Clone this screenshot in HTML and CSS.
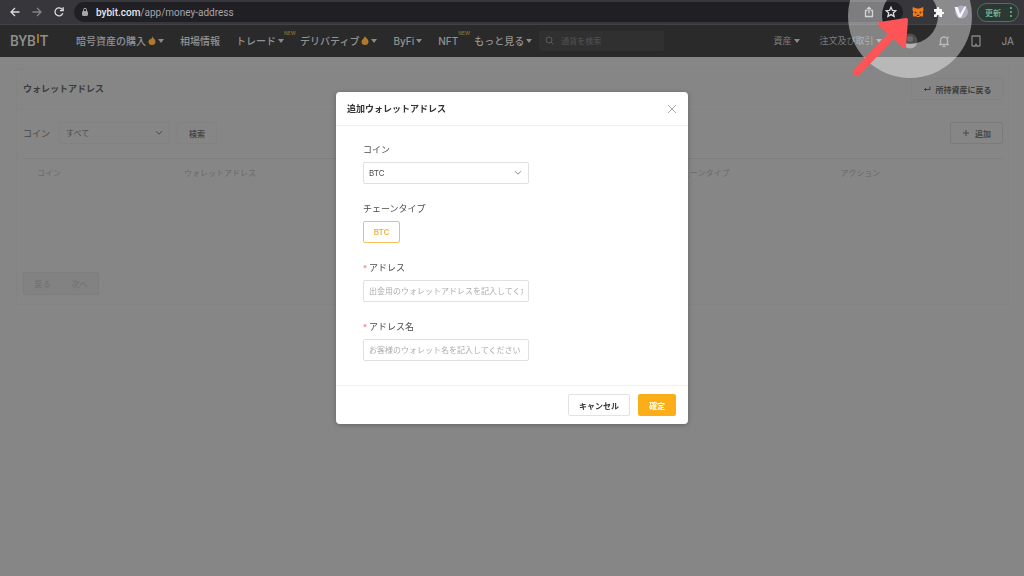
FILE: index.html
```html
<!DOCTYPE html>
<html lang="ja">
<head>
<meta charset="utf-8">
<meta name="viewport" content="width=device-width, initial-scale=1">
<title>ウォレットアドレス</title>
<link rel="stylesheet" href="styles.css">
</head>
<body>
<header class="browser">
  <div class="browser-nav">
    <button class="icon-btn" aria-label="Back"><svg width="12" height="12" viewBox="0 0 12 12"><path d="M10.500 6H2M6 2L2 6l4 4"/></svg></button>
    <button class="icon-btn dim" aria-label="Forward"><svg width="12" height="12" viewBox="0 0 12 12"><path d="M1.500 6H10M6 2l4 4-4 4"/></svg></button>
    <button class="icon-btn" aria-label="Reload"><svg width="12" height="12" viewBox="0 0 12 12"><path d="M9.800 7.200A4 4 0 1 1 9.300 3.600M10.200 1.300V4.600H6.900"/></svg></button>
  </div>
  <div class="address">
    <svg class="lock" width="8" height="10" viewBox="0 0 8 10"><rect x="1.500" y="4.500" width="5" height="4" rx="0.600"/><path d="M2.500 4V2.800a1.500 1.500 0 0 1 3 0V4" fill="none"/></svg>
    <span class="url"><b>bybit.com</b>/app/money-address</span>
    <button class="icon-btn soft" aria-label="Share"><svg width="12" height="12" viewBox="0 0 12 12"><path d="M4.300 4.500H2.500v6h7v-6H7.700M6 7.500V1.500M4 3.300l2-2 2 2"/></svg></button>
    <button class="icon-btn star" aria-label="Bookmark"><svg width="12" height="12" viewBox="0 0 12 12"><path d="M6 1.200l1.400 3.200 3.500.3-2.600 2.300.8 3.400L6 8.600l-3.100 1.800.8-3.400L1.100 4.700l3.500-.3z"/></svg></button>
  </div>
  <div class="extensions">
    <button class="icon-btn" aria-label="MetaMask"><svg class="fox" width="12" height="12" viewBox="0 0 12 12"><path d="M.8 1l3.700 1.500h3L11.200 1l.3 3-.8 2 .6 2.300-.8 2.500-2.300-.6-1 .8H4.800l-1-.8-2.300.6L.7 8.300 1.300 6 .5 4z" fill="#f07c1c"/><path d="M2.500 5.200l2.500 1.600-2 .6zM9.500 5.200L7 6.800l2 .6zM4.500 8.800h3l-.5 1.200H5z" fill="#5b2c12"/></svg></button>
    <button class="icon-btn" aria-label="Extensions"><svg class="puzzle" width="12" height="12" viewBox="0 0 12 12"><path d="M1 3h2.700V2.300a1.300 1.300 0 0 1 2.600 0V3H9v2.700h.8a1.300 1.300 0 0 1 0 2.600H9V11H6.400v-.8a1.300 1.300 0 0 0-2.600 0v.8H1V8.400h.7a1.300 1.300 0 0 0 0-2.600H1z"/></svg></button>
    <button class="icon-btn" aria-label="Profile"><svg class="profile" width="14" height="14" viewBox="0 0 14 14"><circle cx="7.500" cy="7" r="6.500" fill="#77739a"/><path d="M.5 2h3.300l2.200 7L10.500 1.500h2L7 12.500H4.500z" fill="#f2f2f5"/></svg></button>
    <button class="update">更新<svg width="4" height="12" viewBox="0 0 4 12"><circle cx="2" cy="2" r="1"/><circle cx="2" cy="6" r="1"/><circle cx="2" cy="10" r="1"/></svg></button>
  </div>
</header>

<nav class="site-nav">
  <a class="logo" href="#" aria-label="BYBIT">BYB<i></i>T</a>
  <div class="menu">
    <a href="#">暗号資産の購入<svg class="flame" width="8" height="9" viewBox="0 0 8 9"><path d="M4 0c.5 2 3.500 3 3.500 5.500a3.500 3.500 0 0 1-7 0C.5 4 2 3.800 2.300 2.500L3 3.500C3.800 2.500 4 1.500 4 0z"/></svg><span class="caret"></span></a>
    <a href="#">相場情報</a>
    <a href="#">トレード<span class="caret"></span><sup class="new">NEW</sup></a>
    <a href="#">デリバティブ<svg class="flame" width="8" height="9" viewBox="0 0 8 9"><path d="M4 0c.5 2 3.500 3 3.500 5.500a3.500 3.500 0 0 1-7 0C.5 4 3.500 2 4 0z"/></svg><span class="caret"></span></a>
    <a href="#">ByFi<span class="caret"></span></a>
    <a href="#">NFT<sup class="new">NEW</sup></a>
    <a href="#">もっと見る<span class="caret"></span></a>
  </div>
  <label class="search"><svg width="9" height="9" viewBox="0 0 9 9"><circle cx="4" cy="4" r="3"/><path d="M6.200 6.200L8.500 8.500"/></svg><input type="search" placeholder="通貨を検索" aria-label="通貨を検索"></label>
  <div class="account">
    <a href="#">資産<span class="caret"></span></a>
    <a class="orders" href="#">注文及び取引<span class="caret"></span></a>
    <button class="icon-btn" aria-label="Account"><svg class="avatar" width="16" height="16" viewBox="0 0 16 16"><circle cx="8" cy="8" r="7.500" fill="#4e4e4e"/><circle cx="8" cy="6" r="3" fill="#6a6a6a"/><path d="M1 10.500a7.500 7.500 0 0 0 14 0z" fill="#7d7d7d"/></svg></button>
    <button class="icon-btn grey" aria-label="Notifications"><svg width="12" height="12" viewBox="0 0 12 12"><path d="M1 9.500h10M2.500 9.500V5.500a3.500 3.500 0 0 1 7 0v4M4.500 11.300h3"/><circle cx="10" cy="2.500" r="1" fill="#d15b5b" stroke="none"/></svg></button>
    <button class="icon-btn grey" aria-label="App"><svg width="12" height="12" viewBox="0 0 12 12"><rect x="2" y="1" width="8" height="10" rx="0.500"/><path d="M5 9.500h2"/></svg></button>
    <a class="lang" href="#">JA</a>
  </div>
</nav>

<main class="card">
  <div class="card-head">
    <h1>ウォレットアドレス</h1>
    <button class="btn back"><svg width="8" height="8" viewBox="0 0 8 8"><path d="M7 1.500v3H1.500M3 3L1.500 4.500 3 6"/></svg>所持資産に戻る</button>
  </div>
  <div class="card-body">
    <div class="filters">
      <label for="filter-coin">コイン</label>
      <span class="select"><select id="filter-coin"><option>すべて</option></select><svg width="8" height="6" viewBox="0 0 8 6"><path d="M1 1.200l3 3 3-3"/></svg></span>
      <button class="btn find">検索</button>
      <button class="btn add"><svg width="8" height="8" viewBox="0 0 8 8"><path d="M4 1v6M1 4h6"/></svg>追加</button>
    </div>
    <table>
      <thead><tr><th class="c-coin">コイン</th><th class="c-addr">ウォレットアドレス</th><th class="c-chain">チェーンタイプ</th><th>アクション</th></tr></thead>
      <tbody><tr><td class="empty" colspan="4"></td></tr></tbody>
    </table>
    <div class="pager"><button disabled>戻る</button><button disabled>次へ</button></div>
  </div>
</main>

<div class="overlay">
  <form class="dialog" role="dialog" aria-labelledby="dialog-title">
    <div class="dialog-head">
      <h2 id="dialog-title">追加ウォレットアドレス</h2>
      <button type="button" class="icon-btn close" aria-label="閉じる"><svg width="10" height="10" viewBox="0 0 10 10"><path d="M1 1l8 8M9 1L1 9"/></svg></button>
    </div>
    <div class="dialog-body">
      <div class="field">
        <label for="coin">コイン</label>
        <span class="select"><select id="coin"><option>BTC</option></select><svg width="8" height="6" viewBox="0 0 8 6"><path d="M1 1.200l3 3 3-3"/></svg></span>
      </div>
      <div class="field">
        <span class="label">チェーンタイプ</span>
        <button type="button" class="chain">BTC</button>
      </div>
      <div class="field">
        <label class="required" for="address">アドレス</label>
        <input id="address" type="text" placeholder="出金用のウォレットアドレスを記入してください">
      </div>
      <div class="field">
        <label class="required" for="name">アドレス名</label>
        <input id="name" type="text" placeholder="お客様のウォレット名を記入してください">
      </div>
    </div>
    <div class="dialog-foot">
      <button type="button" class="cancel">キャンセル</button>
      <button type="button" class="confirm">確定</button>
    </div>
  </form>
</div>

<svg class="spotlight" width="130" height="80" viewBox="0 0 130 80" aria-hidden="true">
  <path class="ring" fill-rule="evenodd" d="M3 16a62 62 0 1 0 124 0a62 62 0 1 0-124 0zM37 16a28 28 0 1 0 56 0a28 28 0 1 0-56 0z"/>
  <path class="shaft" d="M12 72L47 35"/>
  <path class="tip" d="M61 20L35 24L59 46z"/>
</svg>
</body>
</html>
```
FILE: styles.css
```css
* { box-sizing: border-box; }
body {
  margin: 0;
  min-height: 100vh;
  background: #868686;
  color: #3c3c3c;
  font-family: Inter, "Noto Sans CJK JP", sans-serif;
  font-size: 8px;
}
button, input, select { font: inherit; color: inherit; margin: 0; }
button { cursor: pointer; padding: 0; }
a { color: inherit; text-decoration: none; }
h1, h2 { margin: 0; font-size: 9px; font-weight: 700; line-height: 14px; }
svg { flex: none; fill: none; stroke: currentColor; }

.icon-btn { display: flex; border: 0; background: none; color: #dcdce0; }
.icon-btn svg { stroke-width: 1.3; }
.icon-btn.dim { color: #85848a; }
.icon-btn.soft { color: #b4b4b8; }
.icon-btn.grey { color: #858585; }

.browser {
  display: flex;
  align-items: center;
  height: 25px;
  padding: 0 5px 0 9px;
  background: #37363b;
  border-bottom: 1px solid #424146;
}
.browser-nav { display: flex; gap: 10px; width: 65px; }
.address {
  display: flex;
  flex: 1;
  align-items: center;
  gap: 10px;
  height: 20px;
  padding: 0 6px 0 7px;
  border-radius: 10px;
  background: #201f24;
}
.lock { fill: #a5a5aa; stroke: #a5a5aa; }
.url { flex: 1; margin-left: -3px; font-size: 10px; font-family: Roboto, sans-serif; color: #a6a5aa; }
.url b { font-weight: 500; color: #e8e8ec; }
.extensions { display: flex; align-items: center; gap: 9px; padding-left: 9px; }
.fox, .profile, .avatar { stroke: none; }
.puzzle { fill: #f5f5f5; stroke: none; }
.update {
  display: flex;
  align-items: center;
  gap: 8px;
  height: 19px;
  padding: 0 5px 0 7px;
  border: 1px solid #4c7461;
  border-radius: 10px;
  background: #2b3833;
  color: #79b795;
  font-weight: 500;
}
.update svg { fill: currentColor; stroke: none; }

.site-nav {
  display: flex;
  align-items: center;
  height: 32px;
  padding: 0 10px 1px;
  background: #2a2a2b;
  color: #929292;
  font-size: 10px;
  font-weight: 500;
  white-space: nowrap;
}
.logo { display: flex; align-items: center; width: 66px; font: 500 14px/16px Roboto, sans-serif; color: #8e8e8e; }
.logo i { width: 2px; height: 9px; margin: 0 1px 5px; background: #9b7428; }
.menu { display: flex; gap: 16px; }
.menu a, .account a { position: relative; display: flex; align-items: center; gap: 2px; }
.caret { border: 3px solid transparent; border-top: 4px solid #8a8a8a; border-bottom: 0; }
.flame { fill: #b17a2b; stroke: none; }
.new { position: absolute; left: 100%; top: -3px; font-size: 5px; line-height: 6px; color: #8a712f; }
.search {
  display: flex;
  align-items: center;
  gap: 7px;
  width: 125px;
  height: 20px;
  margin-left: 7px;
  padding: 0 6px;
  border-radius: 2px;
  background: #303031;
  color: #5b5b5b;
  font-size: 8px;
}
.search input { flex: 1; min-width: 0; padding: 0; border: 0; outline: 0; background: none; }
.search input::placeholder { color: #4e4e4e; opacity: 1; }
.account { display: flex; flex: 1; justify-content: flex-end; align-items: center; gap: 20px; font-size: 9px; font-weight: 400; color: #7d7d7d; }
.account .lang { color: #929292; font-size: 10px; }

.card { margin: 11px 15px 11px 16px; border: 1px solid #838383; }
.card-head { display: flex; align-items: center; justify-content: space-between; height: 41px; padding: 0 5px 0 6px; border-bottom: 1px solid #838383; }
.card-body { padding: 11px 5px 9px 6px; }
.btn {
  display: flex;
  align-items: center;
  justify-content: center;
  gap: 5px;
  height: 22px;
  border: 1px solid #7f7f7f;
  border-radius: 2px;
  background: none;
  font-weight: 700;
}
.back { width: 92px; border-color: #828282; }
.filters { display: flex; align-items: center; height: 24px; color: #484848; }
.filters label { margin-right: 9px; font-size: 9px; }
.select { position: relative; display: block; color: #4a4a4a; }
.select select {
  width: 100%;
  height: 22px;
  padding: 0 20px 0 5px;
  border: 1px solid #e0e0e0;
  border-radius: 2px;
  background: none;
  appearance: none;
}
.select svg { position: absolute; right: 7px; top: 8px; pointer-events: none; }
.filters .select { width: 111px; }
.filters .select select { padding-left: 6px; border-color: #828282; }
.find { width: 40px; margin-left: 7px; border-color: #828282; }
.add { width: 53px; margin-left: auto; border-color: #7b7b7b; }
table { width: 100%; margin-top: 13px; border-collapse: collapse; border-top: 1px solid #7e7e7e; table-layout: fixed; }
th { height: 27px; padding: 0 14px; text-align: left; font-weight: 400; color: #696969; }
.c-coin { width: 15%; }
.c-addr { width: 50%; }
.c-chain { width: 17%; }
.empty { height: 86px; padding: 0; }
.pager { display: inline-flex; height: 23px; border: 1px solid #7d7d7d; border-radius: 2px; background: #828282; }
.pager button { width: 37px; border: 0; background: none; color: #6f6f6f; }

.overlay { position: fixed; inset: 0; display: flex; align-items: flex-start; justify-content: center; padding: 92px 16px 16px; }
.dialog { width: 100%; max-width: 352px; border-radius: 4px; background: #fff; box-shadow: 0 1px 5px rgba(0, 0, 0, .25); }
.dialog-head { display: flex; align-items: center; justify-content: space-between; height: 34px; padding: 0 11px; border-bottom: 1px solid #efefef; }
.dialog-head h2 { color: #333; }
.close { color: #a8a8a8; }
.close svg { stroke-width: 1; }
.dialog-body { display: flex; flex-direction: column; gap: 18px; padding: 17px 27px 24px; }
.field { display: flex; flex-direction: column; align-items: flex-start; gap: 5px; }
.field label, .label { font-size: 9px; line-height: 14px; color: #4c4c4c; }
.required::before { content: "*"; margin-right: 2px; color: #e8746f; font-size: 8px; }
.field .select, .field input { width: 166px; }
.field .select svg { color: #888; }
.field input { height: 22px; padding: 0 5px; border: 1px solid #e0e0e0; border-radius: 2px; background: #fff; }
.field input::placeholder { color: #adadad; opacity: 1; }
.chain { width: 37px; height: 22px; border: 1px solid #f3c05e; border-radius: 2px; background: #fff; color: #f0b440; font-weight: 600; }
.dialog-foot { display: flex; justify-content: flex-end; gap: 8px; padding: 8px 12px; border-top: 1px solid #efefef; }
.cancel, .confirm { height: 22px; border-radius: 2px; font-weight: 700; }
.cancel { width: 62px; border: 1px solid #e2e2e2; background: #fff; color: #333; }
.confirm { width: 38px; border: 0; background: #fbae17; color: #fff; }

.spotlight { position: absolute; top: 0; right: 49px; pointer-events: none; stroke: none; }
.ring { fill: rgba(255, 255, 255, .42); }
.shaft { stroke: #fd5557; stroke-width: 8; stroke-linecap: round; }
.tip { fill: #fd5557; stroke: #fd5557; stroke-width: 4; stroke-linejoin: round; }
```
